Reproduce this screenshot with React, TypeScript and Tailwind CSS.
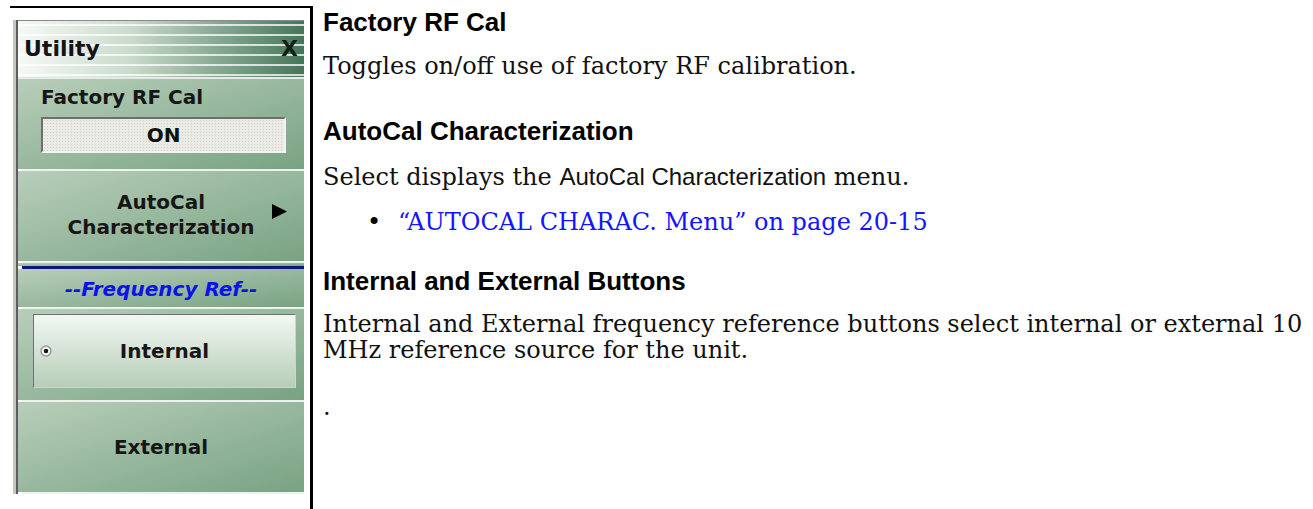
import React from 'react';

const panelFont = { fontFamily: '"DejaVu Sans", "Noto Sans", sans-serif' };
const serif = { fontFamily: '"DejaVu Serif", "Liberation Serif", serif' };
const sans = { fontFamily: '"Liberation Sans", Arial, sans-serif' };

const Separator = () => <div className="ml-[4px] h-[2px] bg-[#eef2ee]" />;

const Section = ({ className, children }: { className: string; children?: React.ReactNode }) => (
  <div className={`bg-gradient-to-br from-[#b8ceba] to-[#78a383] ${className}`}>{children}</div>
);

const UtilityPanel: React.FC = () => {
  return (
    <div className="w-[291px] border-l-[3px] border-[#c6c6be]" style={panelFont}>
      <div className="border-l-2 border-[#5d5d5d]">
        {/* Title bar */}
        <div className="flex h-[57px] items-center justify-between border-t border-[#8a8a8a] bg-[image:repeating-linear-gradient(to_bottom,transparent_0px,transparent_3px,rgba(255,255,255,0.75)_3px,rgba(255,255,255,0.75)_5px,transparent_5px,transparent_10px),linear-gradient(to_right,#f6f9f6,#c9dacb_40%,#44765a)] pl-[6px] pr-[6px]">
          <span className="text-[22px] font-bold leading-[26px] text-[#141414]">Utility</span>
          <span className="text-[22px] font-bold leading-[26px] text-[#0f1f14]">X</span>
        </div>
        <div className="h-[2px] bg-[#e4ebe4]" />

        {/* Factory RF Cal */}
        <Section className="h-[90px] pt-[6px] pl-[23px]">
          <div className="text-[20px] font-bold leading-[24px] text-[#161616]">Factory RF Cal</div>
          <div className="mt-[8px] flex h-[36px] w-[245px] items-center justify-center border-2 border-t-[#6e6e6e] border-l-[#6e6e6e] border-b-[#f2f2f2] border-r-[#f2f2f2] bg-[#ebebe5] bg-[image:radial-gradient(#d2d2cb_0.8px,transparent_0.8px)] bg-[length:3px_3px]">
            <span className="text-[20px] font-bold leading-[24px] text-[#111]">ON</span>
          </div>
        </Section>
        <Separator />

        {/* AutoCal Characterization */}
        <Section className="relative flex h-[90px] items-center justify-center pb-[2px]">
          <div className="text-center text-[20px] font-bold leading-[25px] text-[#161616]">
            AutoCal
            <br />
            Characterization
          </div>
          <svg className="absolute right-[17px] top-[33px]" width="15" height="15" viewBox="0 0 15 15">
            <polygon points="0,0 15,7.5 0,15" fill="#000" />
          </svg>
        </Section>
        <Separator />
        <Section className="h-[3px]" />
        <div className="ml-[4px] h-[3px] bg-[#0b1680]" />

        {/* Frequency Ref label */}
        <Section className="h-[38px] pt-[8px] text-center">
          <span className="text-[20px] font-bold italic leading-[24px] text-[#0a14e8]">--Frequency Ref--</span>
        </Section>
        <Separator />

        {/* Internal */}
        <Section className="h-[91px] pt-[5px] pl-[15px]">
          <div className="relative flex h-[74px] w-[263px] items-center justify-center border border-t-[#707070] border-l-[#707070] border-b-[#c9d6c9] border-r-[#c9d6c9] bg-gradient-to-b from-[#f3f7f3] to-[#b6ceb9]">
            <svg className="absolute left-[6px] top-[30px]" width="12" height="12" viewBox="0 0 12 12">
              <circle cx="6" cy="6" r="5" fill="#f4f4f4" stroke="#9a9a9a" strokeWidth="1.4" />
              <circle cx="6" cy="6" r="2.2" fill="#111" />
            </svg>
            <span className="text-[20px] font-bold leading-[24px] text-[#161616]">Internal</span>
          </div>
        </Section>
        <Separator />

        {/* External */}
        <Section className="flex h-[90px] items-center justify-center">
          <span className="text-[20px] font-bold leading-[24px] text-[#161616]">External</span>
        </Section>
        <Separator />
      </div>
    </div>
  );
};

const Heading = ({ children, className }: { children: React.ReactNode; className: string }) => (
  <h2 className={`text-[26px] font-bold leading-[30px] text-black ${className}`} style={sans}>
    {children}
  </h2>
);

const App: React.FC = () => {
  return (
    <div className="flex h-[509px] w-[1313px] overflow-hidden bg-white">
      <div className="ml-[10px] mt-[6px] h-[503px] w-[303px] shrink-0 border-t-2 border-r-[3px] border-black pl-[3px] pt-[12px]">
        <UtilityPanel />
      </div>

      <div className="pl-[10px] text-[24px] leading-[26px] text-[#111]" style={serif}>
        <Heading className="mt-[7px]">Factory RF Cal</Heading>
        <p className="mt-[16px]">Toggles on/off use of factory RF calibration.</p>

        <Heading className="mt-[37px]">AutoCal Characterization</Heading>
        <p className="mt-[18px]">
          Select displays the <span style={sans}>AutoCal Characterization</span> menu.
        </p>
        <div className="mt-[19px] flex">
          <span className="w-[75px] pl-[44px] text-black">•</span>
          <span className="text-[#1515ff]">“AUTOCAL CHARAC. Menu” on page 20-15</span>
        </div>

        <Heading className="mt-[31px]">Internal and External Buttons</Heading>
        <p className="mt-[15px] whitespace-nowrap leading-[26px]">
          Internal and External frequency reference buttons select internal or external 10
          <br />
          MHz reference source for the unit.
        </p>
        <p className="mt-[31px]">.</p>
      </div>
    </div>
  );
};

export default App;
